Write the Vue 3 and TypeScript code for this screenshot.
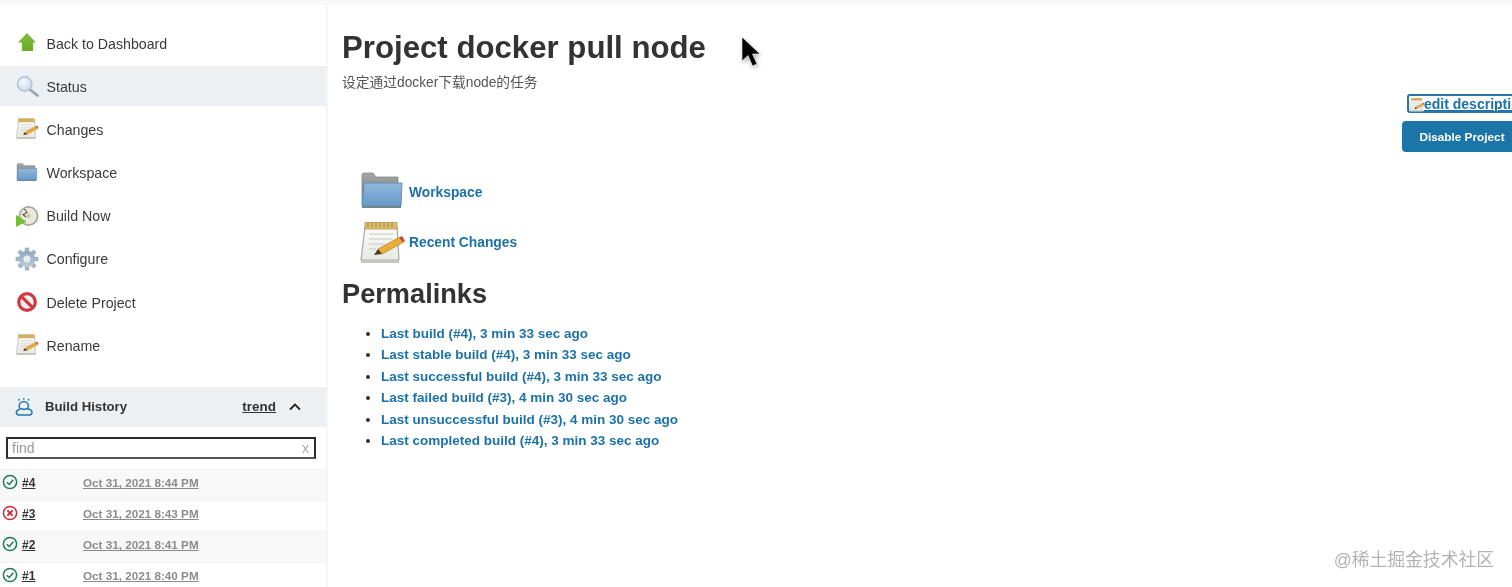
<script setup lang="ts">
const navItems = [
  { label: 'Back to Dashboard', icon: 'up', active: false },
  { label: 'Status', icon: 'search', active: true },
  { label: 'Changes', icon: 'notepad', active: false },
  { label: 'Workspace', icon: 'folder', active: false },
  { label: 'Build Now', icon: 'clock', active: false },
  { label: 'Configure', icon: 'gear', active: false },
  { label: 'Delete Project', icon: 'no', active: false },
  { label: 'Rename', icon: 'notepad', active: false },
]
const builds = [
  { id: '#4', date: 'Oct 31, 2021 8:44 PM', ok: true },
  { id: '#3', date: 'Oct 31, 2021 8:43 PM', ok: false },
  { id: '#2', date: 'Oct 31, 2021 8:41 PM', ok: true },
  { id: '#1', date: 'Oct 31, 2021 8:40 PM', ok: true },
]
const permalinks = [
  'Last build (#4), 3 min 33 sec ago',
  'Last stable build (#4), 3 min 33 sec ago',
  'Last successful build (#4), 3 min 33 sec ago',
  'Last failed build (#3), 4 min 30 sec ago',
  'Last unsuccessful build (#3), 4 min 30 sec ago',
  'Last completed build (#4), 3 min 33 sec ago',
]
const gearTeeth = [0, 45, 90, 135, 180, 225, 270, 315]
</script>

<template>
  <div class="page">
    <svg class="defs" aria-hidden="true">
      <defs>
        <linearGradient id="gGreen" x1="0" y1="0" x2="0" y2="1">
          <stop offset="0" stop-color="#7fbe3c" />
          <stop offset="1" stop-color="#69ab2a" />
        </linearGradient>
        <linearGradient id="gFolder" x1="0" y1="0" x2="0" y2="1">
          <stop offset="0" stop-color="#90b8dc" />
          <stop offset="1" stop-color="#6699c8" />
        </linearGradient>
        <linearGradient id="gTab" x1="0" y1="0" x2="0" y2="1">
          <stop offset="0" stop-color="#a6a6a6" />
          <stop offset="1" stop-color="#747474" />
        </linearGradient>
        <linearGradient id="gPaper" x1="0" y1="0" x2="0" y2="1">
          <stop offset="0" stop-color="#fbfbf8" />
          <stop offset="1" stop-color="#e8e8e4" />
        </linearGradient>
        <linearGradient id="gGear" x1="0" y1="0" x2="0" y2="1">
          <stop offset="0" stop-color="#8ba8c2" />
          <stop offset="1" stop-color="#c0ccd6" />
        </linearGradient>
        <radialGradient id="gLens" cx="0.4" cy="0.35" r="0.7">
          <stop offset="0" stop-color="#f7fafd" />
          <stop offset="1" stop-color="#c6d8ea" />
        </radialGradient>
      </defs>
      <symbol id="i-up" viewBox="0 0 24 24">
        <path d="M12 2 L21 11.5 H18 V20 H7 V11.5 H3 Z" fill="url(#gGreen)" />
      </symbol>
      <symbol id="i-search" viewBox="0 0 24 24">
        <path d="M15 15.5 L22.5 21.5" stroke="#98a5b1" stroke-width="2.8" stroke-linecap="round" />
        <circle cx="9.7" cy="10" r="7.2" fill="url(#gLens)" stroke="#b1c2d2" stroke-width="1.5" />
      </symbol>
      <symbol id="i-notepad" viewBox="0 0 48 48">
        <path d="M7 8 H39 L41 41 H3 Z" fill="url(#gPaper)" stroke="#a8a8a4" stroke-width="1.2" />
        <path d="M3 41 H41 V44 H3 Z" fill="#c4c4c1" />
        <rect x="7" y="3.5" width="32" height="6.5" fill="#dcbd70" stroke="#bb9a4c" stroke-width="0.8" />
        <path d="M10 3.5v5M14 3.5v5M18 3.5v5M22 3.5v5M26 3.5v5M30 3.5v5M34 3.5v5" stroke="#a88b44" stroke-width="1.1" />
        <path d="M11 15H35M11 20H35M11 25H27M11 30H18" stroke="#c8c8c3" stroke-width="1.2" />
        <path d="M20 30 L41 18.5 L45 23.5 L24 35 Z" fill="#e8ae37" stroke="#b07c2a" stroke-width="0.7" />
        <path d="M41 18.5 L45 23.5 L47 22 L44 17 Z" fill="#d0443f" />
        <path d="M20 30 L24 35 L16 36 Z" fill="#4b3a22" />
      </symbol>
      <symbol id="i-folder" viewBox="0 0 48 48">
        <path d="M4 7 a2 2 0 0 1 2-2 H15 L18 9 H40 V36 H4 Z" fill="url(#gTab)" stroke="#808080" stroke-width="0.7" />
        <path d="M6 15 H44 L43 38 H4 Z" fill="url(#gFolder)" stroke="#5b8ab3" stroke-width="0.9" />
        <path d="M4 38 H43 V40 H4 Z" fill="#75838f" />
      </symbol>
      <symbol id="i-clock" viewBox="0 0 24 24">
        <circle cx="13.5" cy="12" r="10" fill="#a8a89e" />
        <circle cx="13.5" cy="12" r="8.2" fill="#ebe9da" />
        <circle cx="13.5" cy="12" r="2.2" fill="#c9c7b8" />
        <path d="M9.5 5 L12 8.5 L8 10.5 L11 13" stroke="#55524a" stroke-width="1.1" fill="none" />
        <path d="M1 11 L11.5 17.5 L1 23 Z" fill="#72bf30" />
      </symbol>
      <symbol id="i-gear" viewBox="0 0 24 24">
        <rect
          v-for="a in gearTeeth"
          :key="a"
          x="9.8"
          y="0.6"
          width="4.4"
          height="5"
          fill="#9db4c8"
          :transform="'rotate(' + a + ' 12 12)'"
        />
        <circle cx="12" cy="12" r="8.2" fill="url(#gGear)" />
        <circle cx="12" cy="12" r="3.5" fill="#e9eef2" />
      </symbol>
      <symbol id="i-no" viewBox="0 0 24 24">
        <circle cx="12" cy="12" r="8.3" fill="#f1eeee" stroke="#cf3a42" stroke-width="3.2" />
        <path d="M6.3 6.3 L17.7 17.7" stroke="#cf3a42" stroke-width="3.2" />
      </symbol>
    </svg>

    <div class="topband"></div>

    <div class="layout">
      <aside class="sidebar">
        <nav class="tasks">
          <a v-for="item in navItems" :key="item.label" class="task" :class="{ active: item.active }">
            <svg class="task-icon"><use :href="'#i-' + item.icon" /></svg>
            <span>{{ item.label }}</span>
          </a>
        </nav>

        <section class="history">
          <header class="history-head">
            <svg class="weather" viewBox="0 0 18 18" fill="none" stroke="#1f78a8" stroke-width="1.5">
              <circle cx="8.8" cy="8" r="4.6" />
              <path d="M4 1.6v.4M8.8 0.6v.4M13.6 1.6v.4" stroke-linecap="round" stroke-width="1.6" />
              <path d="M3.5 17 h11 a2.6 2.6 0 0 0 .6-5.1 C13.5 10.5 11 10.5 9 11.5 C7 10.5 4.5 10.5 3 12 a2.6 2.6 0 0 0 .5 5 Z" fill="#e8f0f6" />
            </svg>
            <span class="history-title">Build History</span>
            <a class="trend">trend</a>
            <svg class="chevron" viewBox="0 0 12 8" fill="none" stroke="#222" stroke-width="1.8"><path d="M1 6.5 L6 1.5 L11 6.5" /></svg>
          </header>
          <div class="find">
            <span class="find-text">find</span>
            <span class="find-x">x</span>
          </div>
          <ul class="builds">
            <li v-for="b in builds" :key="b.id" class="build">
              <svg class="status" viewBox="0 0 16 16" fill="none">
                <circle cx="8" cy="8" r="6.6" :stroke="b.ok ? '#1f7a5a' : '#cc2b3b'" stroke-width="1.5" />
                <path v-if="b.ok" d="M4.8 8.2 L7.2 10.5 L11.3 5.8" stroke="#1f7a5a" stroke-width="1.5" />
                <path v-else d="M5.4 5.4 L10.6 10.6 M10.6 5.4 L5.4 10.6" stroke="#cc2b3b" stroke-width="2" />
              </svg>
              <a class="build-id">{{ b.id }}</a>
              <a class="build-date">{{ b.date }}</a>
            </li>
          </ul>
        </section>
      </aside>

      <main class="main">
        <div class="side-actions">
          <a class="edit">
            <svg class="edit-icon"><use href="#i-notepad" /></svg>edit description
          </a>
          <button class="disable" type="button">Disable Project</button>
        </div>

        <h1 class="title">Project docker pull node</h1>
        <p class="desc">设定通过docker下载node的任务</p>

        <div class="links">
          <a class="big-link">
            <svg class="big-icon"><use href="#i-folder" /></svg>
            <span>Workspace</span>
          </a>
          <a class="big-link">
            <svg class="big-icon"><use href="#i-notepad" /></svg>
            <span>Recent Changes</span>
          </a>
        </div>

        <h2 class="subtitle">Permalinks</h2>
        <ul class="permalinks">
          <li v-for="p in permalinks" :key="p"><a>{{ p }}</a></li>
        </ul>
      </main>
    </div>

    <svg class="cursor" viewBox="0 0 24 34">
      <path d="M3 2 V26 L9 20.5 L13.5 31 L18 29 L13.5 19 H21 Z" fill="#000" stroke="#fff" stroke-width="0.6" />
    </svg>
    <div class="watermark">@稀土掘金技术社区</div>
  </div>
</template>

<style>
html, body { margin: 0; overflow: hidden; background: #fff; }
</style>

<style scoped>
.page {
  position: relative;
  width: 1512px;
  height: 587px;
  overflow: hidden;
  background: #fff;
  color: #333;
  font-family: "Liberation Sans", "Noto Sans CJK SC", sans-serif;
  filter: blur(0.35px);
}
.defs { position: absolute; width: 0; height: 0; }
.topband { height: 5px; background: #f8f8f8; }
.layout { display: flex; height: 582px; }
.sidebar {
  width: 326px;
  flex: none;
  border-right: 2px solid #f4f5f6;
  overflow: hidden;
}
.tasks {
  display: flex;
  flex-direction: column;
  gap: 3.2px;
  padding-top: 18px;
}
.task {
  display: flex;
  align-items: center;
  gap: 7.5px;
  height: 40px;
  padding-left: 15px;
  font-size: 14.2px;
  color: #3a3a3a;
}
.task span { padding-top: 1px; }
.task.active { background: #edf0f3; }
.task-icon { width: 24px; height: 24px; flex: none; }
.history { margin-top: 21.5px; }
.history-head {
  display: flex;
  align-items: center;
  height: 40px;
  padding-left: 15px;
  background: #edf0f3;
}
.weather { width: 18px; height: 18px; flex: none; }
.history-title { margin-left: 12px; font-size: 13.2px; font-weight: 700; color: #333; }
.trend { margin-left: auto; font-size: 13.5px; font-weight: 700; text-decoration: underline; color: #333; }
.chevron { width: 12px; height: 8px; margin: 0 25px 0 13px; }
.find {
  display: flex;
  align-items: center;
  justify-content: space-between;
  box-sizing: border-box;
  margin: 10px 10px 0 6px;
  height: 22px;
  padding: 1px 5px 0 4px;
  border: 2px solid #2b2b2b;
  border-bottom-color: #555;
  font-size: 14px;
  color: #9a9a9a;
}
.find-x { font-size: 14px; color: #aaa; margin-top: -1px; }
.builds { list-style: none; margin: 10px 0 0; padding: 0; }
.build {
  display: flex;
  align-items: center;
  height: 31px;
  box-sizing: border-box;
  border-top: 1px solid #f2f2f2;
  padding: 0 0 4px 2px;
}
.build:nth-child(odd) { background: #f8f8f8; }
.status { width: 16px; height: 16px; flex: none; margin-bottom: 2px; }
.build-id { margin-left: 4px; width: 61px; font-size: 12px; font-weight: 700; color: #333; text-decoration: underline; }
.build-date { font-size: 11.7px; font-weight: 700; color: #8c8c8c; text-decoration: underline; }

.main {
  position: relative;
  flex: 1;
  min-width: 0;
  padding-left: 14px;
}
.side-actions {
  float: right;
  display: flex;
  flex-direction: column;
  align-items: flex-start;
  gap: 8px;
  margin-top: 89px;
  margin-right: -60px;
}
.edit {
  display: flex;
  align-items: center;
  height: 19px;
  box-sizing: border-box;
  margin-left: 5px;
  border: 2px solid #2c73a8;
  border-radius: 3px;
  font-size: 14px;
  font-weight: 700;
  color: #1c72a8;
  text-decoration: underline;
  white-space: nowrap;
}
.edit-icon { width: 16px; height: 16px; flex: none; margin: 2px -1px 0 0; }
.disable {
  width: 170px;
  height: 31px;
  padding: 0 50px 0 0;
  border: 0;
  border-radius: 4px;
  background: #1b75a9;
  color: #fff;
  font: 700 11.8px "Liberation Sans", sans-serif;
}
.title {
  margin: 0;
  padding-top: 25px;
  font-size: 31.2px;
  line-height: 36px;
  font-weight: 700;
  color: #333;
}
.desc {
  margin: 8px 0 0;
  font-size: 13.75px;
  line-height: 18px;
  color: #555;
}
.links {
  display: flex;
  flex-direction: column;
  gap: 0;
  margin-top: 75px;
}
.big-link {
  display: flex;
  align-items: center;
  gap: 3px;
  height: 50.5px;
  padding-left: 16px;
  font-size: 13.8px;
  font-weight: 700;
  color: #1c72a8;
}
.big-icon { width: 48px; height: 48px; flex: none; }
.subtitle {
  margin: 10px 0 0;
  font-size: 27.2px;
  line-height: 32px;
  font-weight: 700;
  color: #333;
}
.permalinks {
  margin: 13px 0 0;
  padding-left: 39px;
  font-size: 13.5px;
  line-height: 21.4px;
  font-weight: 700;
  color: #333;
}
.permalinks a { color: #1c72a8; }
.cursor {
  position: absolute;
  left: 739px;
  top: 35px;
  width: 24px;
  height: 34px;
  filter: drop-shadow(1px 2px 2px rgba(0, 0, 0, 0.3));
}
.watermark {
  position: absolute;
  right: 18px;
  top: 549px;
  font-size: 17.8px;
  line-height: 22px;
  color: #b3b3b3;
  white-space: nowrap;
}
</style>
